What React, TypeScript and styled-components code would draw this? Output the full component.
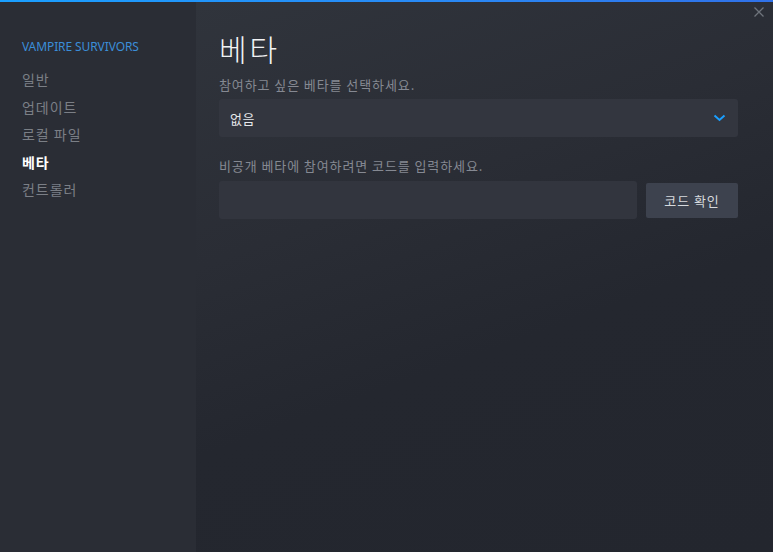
import React from "react";
import styled, { createGlobalStyle } from "styled-components";

const Global = createGlobalStyle`
  html, body { margin: 0; padding: 0; height: 100%; background: #24272f; }
  #root { height: 100%; }
  * { box-sizing: border-box; }
  body { font-family: "Noto Sans CJK KR", "Noto Sans", sans-serif; }
`;

const Window = styled.div`
  width: 773px;
  height: 552px;
  display: flex;
  flex-direction: column;
  overflow: hidden;
  position: relative;
`;

const TopLine = styled.div`
  height: 2px;
  flex: none;
  background: linear-gradient(90deg, #1a9fff 0%, #2a88f5 60%, #3071e8 100%);
`;

const Body = styled.div`
  flex: 1;
  display: flex;
  min-height: 0;
`;

const Sidebar = styled.nav`
  width: 196px;
  flex: none;
  background: #2a2d35;
  padding: 37px 0 0 22px;
  display: flex;
  flex-direction: column;
`;

const GameTitle = styled.div`
  font-family: "Noto Sans", sans-serif;
  font-size: 12px;
  color: #3b8ed8;
  letter-spacing: -0.1px;
  line-height: 16px;
  margin-bottom: 11px;
`;

const NavItem = styled.div<{ $active?: boolean }>`
  font-size: 14px;
  letter-spacing: 0.07em;
  line-height: 27.5px;
  height: 27.5px;
  color: ${(p) => (p.$active ? "#ffffff" : "#7b7f86")};
  font-weight: ${(p) => (p.$active ? 700 : 400)};
`;

const Main = styled.main`
  flex: 1;
  background: linear-gradient(160deg, #30343c 0%, #2a2d35 35%, #24272f 60%, #23262e 100%);
  padding: 26px 35px 0 23px;
  display: flex;
  flex-direction: column;
`;

const Heading = styled.h1`
  margin: 0;
  font-size: 30px;
  font-weight: 300;
  color: #f1f2f4;
  line-height: 40px;
  letter-spacing: 3px;
`;

const Label = styled.div`
  font-size: 13px;
  letter-spacing: 0.07em;
  color: #858992;
  line-height: 18px;
`;

const Select = styled.div`
  margin-top: 5px;
  height: 38px;
  background: #33363f;
  border-radius: 3px;
  display: flex;
  align-items: center;
  justify-content: space-between;
  padding: 0 12px 0 11px;
  font-size: 13px;
  letter-spacing: 0.05em;
  color: #e6e8eb;
`;

const Section = styled.div<{ $gap?: number }>`
  margin-top: ${(p) => p.$gap ?? 0}px;
  display: flex;
  flex-direction: column;
`;

const Row = styled.div`
  margin-top: 6px;
  display: flex;
  align-items: center;
  gap: 9px;
`;

const Input = styled.div`
  flex: 1;
  height: 38px;
  background: #32353e;
  border-radius: 3px;
`;

const Button = styled.div`
  width: 92px;
  height: 35px;
  background: #3d424e;
  border-radius: 2px;
  display: flex;
  align-items: center;
  justify-content: center;
  font-size: 13px;
  letter-spacing: 0.07em;
  color: #d7dade;
`;

const Close = styled.div`
  position: absolute;
  top: 6px;
  right: 8px;
  width: 12px;
  height: 12px;
  display: flex;
`;

export default function App() {
  return (
    <Window>
      <Global />
      <TopLine />
      <Body>
        <Sidebar>
          <GameTitle>VAMPIRE SURVIVORS</GameTitle>
          <NavItem>일반</NavItem>
          <NavItem>업데이트</NavItem>
          <NavItem>로컬 파일</NavItem>
          <NavItem $active>베타</NavItem>
          <NavItem>컨트롤러</NavItem>
        </Sidebar>
        <Main>
          <Heading>베타</Heading>
          <Section $gap={8}>
            <Label>참여하고 싶은 베타를 선택하세요.</Label>
            <Select>
              <span>없음</span>
              <svg width="13" height="8" viewBox="0 0 13 8">
                <path d="M1.5 1.5 L6.5 6 L11.5 1.5" fill="none" stroke="#1a9fff" strokeWidth="2" />
              </svg>
            </Select>
          </Section>
          <Section $gap={20}>
            <Label>비공개 베타에 참여하려면 코드를 입력하세요.</Label>
            <Row>
              <Input />
              <Button>코드 확인</Button>
            </Row>
          </Section>
        </Main>
      </Body>
      <Close>
        <svg width="12" height="12" viewBox="0 0 12 12">
          <path d="M1.5 1.5 L10.5 10.5 M10.5 1.5 L1.5 10.5" stroke="#6f747c" strokeWidth="1.3" />
        </svg>
      </Close>
    </Window>
  );
}
